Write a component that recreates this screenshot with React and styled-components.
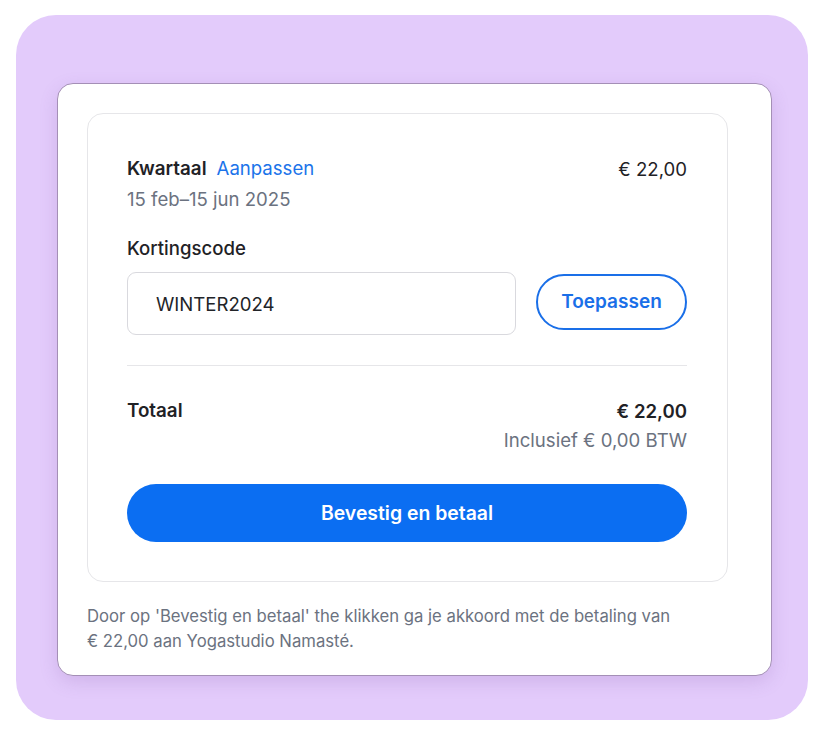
import React, { useState } from 'react';
import styled, { createGlobalStyle } from 'styled-components';

const GlobalStyle = createGlobalStyle`
  body {
    margin: 0;
    background: #ffffff;
    font-family: Inter, "Noto Sans", "Liberation Sans", sans-serif;
    -webkit-font-smoothing: antialiased;
  }
`;

const Backdrop = styled.div`
  margin: 15px 0 0 16px;
  width: 792px;
  height: 705px;
  box-sizing: border-box;
  padding: 68px 36px 0 41px;
  background: #e3cbfb;
  border-radius: 40px;
`;

const Sheet = styled.div`
  width: 715px;
  box-sizing: border-box;
  padding: 29px 30px 21px 29px;
  background: #ffffff;
  border: 1px solid #a48fb6;
  border-radius: 16px;
  box-shadow: 0 6px 18px rgba(120, 80, 160, 0.18);
`;

const Card = styled.div`
  width: 641px;
  box-sizing: border-box;
  padding: 40px 40px 39px 39px;
  border: 1px solid #e6e6e9;
  border-radius: 16px;
`;

const Row = styled.div`
  display: flex;
  justify-content: space-between;
  align-items: center;
`;

const Strong = styled.span`
  font-size: 18.8px;
  line-height: 28px;
  font-weight: 600;
  color: #1f2226;
`;

const Link = styled.a`
  margin-left: 10px;
  font-size: 18.6px;
  line-height: 28px;
  color: #1c74ea;
  text-decoration: none;
  cursor: pointer;
`;

const Price = styled.span`
  font-size: 18.6px;
  line-height: 28px;
  font-weight: ${p => (p.$bold ? 600 : 400)};
  color: #1f2226;
`;

const Muted = styled.div`
  font-size: 18.6px;
  line-height: 28px;
  color: #6b7280;
  text-align: ${p => p.$align || 'left'};
  margin-top: ${p => p.$top || 0}px;
`;

const Label = styled.label`
  display: block;
  margin-top: 21px;
  font-size: 18.6px;
  line-height: 28px;
  font-weight: 500;
  color: #1f2226;
`;

const CodeRow = styled.div`
  display: flex;
  align-items: center;
  gap: 20px;
  margin-top: 10px;
`;

const CodeInput = styled.input`
  flex: 1;
  height: 63px;
  box-sizing: border-box;
  padding: 0 28px;
  border: 1px solid #d9d9de;
  border-radius: 9px;
  font-family: inherit;
  font-size: 18.6px;
  color: #222428;
  outline: none;
`;

const OutlineButton = styled.button`
  width: 151px;
  height: 56px;
  margin-top: -4px;
  border: 2px solid #1a6fe8;
  border-radius: 28px;
  background: #ffffff;
  font-family: inherit;
  font-size: 19px;
  font-weight: 600;
  color: #1a6fe8;
  cursor: pointer;
`;

const Divider = styled.hr`
  margin: 30px 0 31px;
  border: 0;
  border-top: 1px solid #e6e6e9;
`;

const PayButton = styled.button`
  width: 100%;
  height: 58px;
  margin-top: 30px;
  border: 0;
  border-radius: 29px;
  background: #0b6ef2;
  font-family: inherit;
  font-size: 19.4px;
  font-weight: 600;
  color: #ffffff;
  cursor: pointer;
`;

const Note = styled.p`
  margin: 22px 0 0;
  font-size: 16.7px;
  line-height: 25px;
  color: #6b7280;
`;

export default function App() {
  const [code, setCode] = useState('WINTER2024');

  return (
    <>
      <GlobalStyle />
      <Backdrop>
        <Sheet>
          <Card>
            <Row>
              <div>
                <Strong>Kwartaal</Strong>
                <Link>Aanpassen</Link>
              </div>
              <Price>€ 22,00</Price>
            </Row>
            <Muted $top={2}>15 feb–15 jun 2025</Muted>

            <Label htmlFor="code">Kortingscode</Label>
            <CodeRow>
              <CodeInput id="code" value={code} onChange={e => setCode(e.target.value)} />
              <OutlineButton>Toepassen</OutlineButton>
            </CodeRow>

            <Divider />

            <Row>
              <Strong>Totaal</Strong>
              <Price $bold>€ 22,00</Price>
            </Row>
            <Muted $align="right" $top={1}>Inclusief € 0,00 BTW</Muted>

            <PayButton>Bevestig en betaal</PayButton>
          </Card>
          <Note>
            Door op 'Bevestig en betaal' the klikken ga je akkoord met de betaling van
            <br />
            € 22,00 aan Yogastudio Namasté.
          </Note>
        </Sheet>
      </Backdrop>
    </>
  );
}
